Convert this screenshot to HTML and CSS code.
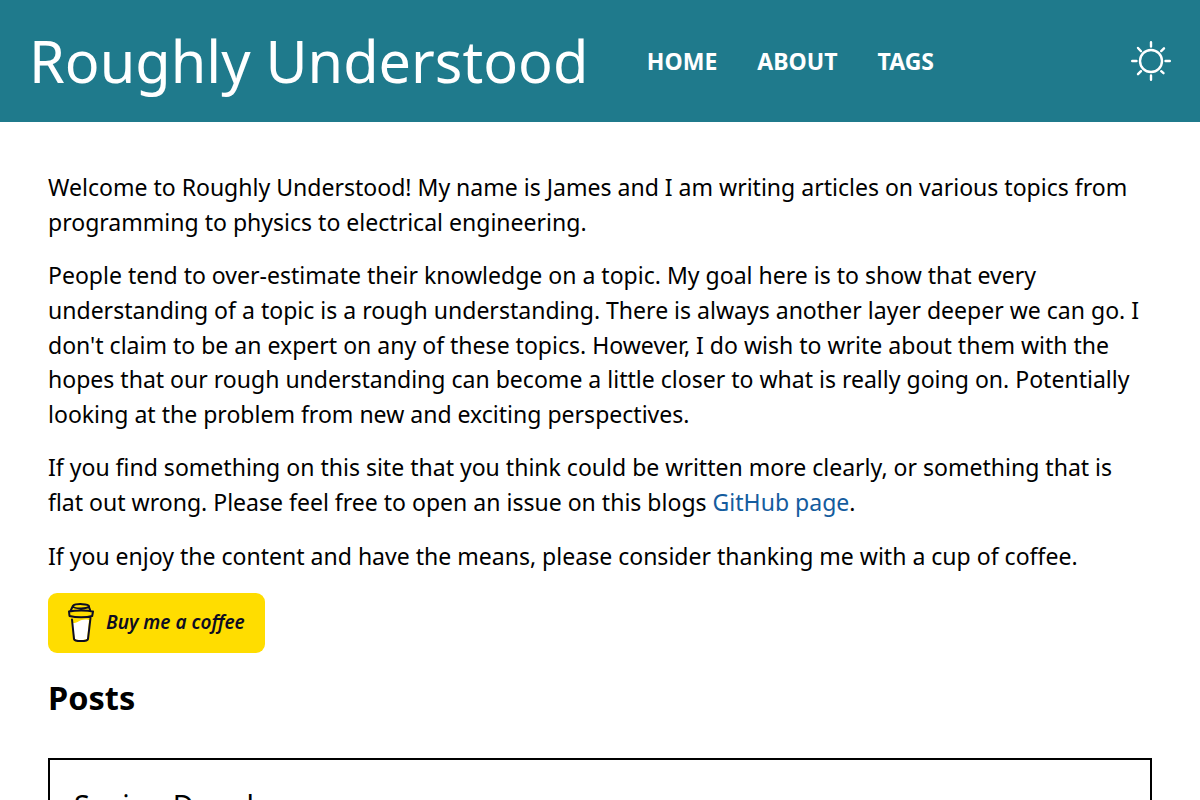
FILE: index.html
```html
<!DOCTYPE html>
<html lang="en">
<head>
    <meta charset="UTF-8">
    <meta name="viewport" content="width=device-width, initial-scale=1.0">
    <title>Roughly Understood</title>
    <link rel="stylesheet" href="styles.css">
</head>
<body>
    <header class="site-header">
        <a class="site-title" href="#">Roughly Understood</a>
        <nav class="site-nav">
            <a href="#">HOME</a>
            <a href="#">ABOUT</a>
            <a href="#">TAGS</a>
        </nav>
        <button class="theme-toggle" aria-label="Toggle theme">
            <svg viewBox="0 0 40 40" width="40" height="40">
                <circle cx="20" cy="20" r="11"/>
                <path d="M20 1.2v4.3M20 34.5v4.3M1.2 20h4.3M34.5 20h4.3M7 7l3 3.200M33 7.300l-2.800 2.800M7 33.200l3-3M32.500 32.200l-2.300-2"/>
            </svg>
        </button>
    </header>

    <main class="content">
        <p>Welcome to Roughly Understood! My name is James and I am writing articles on various topics from programming to physics to electrical engineering.</p>
        <p>People tend to over-estimate their knowledge on a topic. My goal here is to show that every understanding of a topic is a rough understanding. There is always another layer deeper we can go. I don't claim to be an expert on any of these topics. However, I do wish to write about them with the hopes that our rough understanding can become a little closer to what is really going on. Potentially looking at the problem from new and exciting perspectives.</p>
        <p>If you find something on this site that you think could be written more clearly, or something that is flat out wrong. Please feel free to open an issue on this blogs <a href="#">GitHub page</a>.</p>
        <p>If you enjoy the content and have the means, please consider thanking me with a cup of coffee.</p>

        <a class="coffee-button" href="#">
            <svg class="coffee-cup" viewBox="0 0 30 40" width="30" height="40">
                <path class="milk" d="M6 20c6 1 8-5 17-3l-2 19c-4 1.500-9 1.500-12 0z"/>
                <path d="M7 3.500c1 2.500 14 2.500 16 .2 1-3-13-3.500-16-1L4.500 8M23 4l1.500 4M3 8.500c7-1.500 18-1.500 24 0l-.8 4.500c-6 1.800-16 1.800-22.700 0zM6 16.500L8 36c.5 2.800 13.500 2.800 14 0l2.500-21"/>
            </svg>
            <span>Buy me a coffee</span>
        </a>

        <h2>Posts</h2>
        <article class="post-card">
            <a class="post-title" href="#">Seeing Doppler</a>
        </article>
    </main>
</body>
</html>
```
FILE: styles.css
```css
* {
    box-sizing: border-box;
}

body {
    margin: 0;
    height: 100vh;
    overflow: hidden;
    font-family: "Noto Sans", sans-serif;
    font-size: 23.04px;
    line-height: 34.7px;
    color: #000;
    background-color: #fff;
}

a {
    color: #145c9e;
    text-decoration: none;
}

.site-header {
    display: flex;
    align-items: center;
    height: 122px;
    padding: 0 29px;
    background-color: #1f7a8c;
}

.site-header a {
    color: #fff;
}

.site-header .site-title {
    font-size: 57.6px;
    line-height: 1.5;
}

.site-nav {
    display: flex;
    gap: 40px;
    margin-left: 58.5px;
    font-weight: bold;
}

.theme-toggle {
    display: flex;
    margin-left: auto;
    padding: 0;
    border: none;
    background: none;
}

.theme-toggle svg {
    fill: none;
    stroke: #fff;
    stroke-width: 2.4;
    stroke-linecap: round;
}

.content {
    display: flex;
    flex-direction: column;
    height: calc(100vh - 122px);
    padding: 48px 48px 0;
}

.content p {
    flex-shrink: 0;
    margin: 0 0 18.7px;
}

.content p:nth-of-type(3) {
    margin-bottom: 19px;
}

.coffee-button {
    display: flex;
    flex-shrink: 0;
    align-items: center;
    gap: 10px;
    width: 217px;
    height: 60px;
    margin-top: 0.6px;
    padding-left: 18px;
    border-radius: 9px;
    background-color: #ffdd00;
    color: #0d0c22;
    font-size: 19px;
    font-style: italic;
    font-weight: 600;
    white-space: nowrap;
}

.coffee-cup {
    fill: none;
    stroke: #0d0c22;
    stroke-width: 2;
    stroke-linejoin: round;
    stroke-linecap: round;
}

.coffee-cup .milk {
    fill: #fff;
    stroke: none;
}

h2 {
    flex-shrink: 0;
    margin: 21px 0 36px;
    font-size: 32.5px;
    line-height: 48px;
}

.post-card {
    flex: 1;
    min-height: 0;
    padding: 23px 24px 0;
    border: 2px solid #000;
    border-bottom: none;
    overflow: hidden;
}

.post-title {
    display: block;
    color: #000;
    font-size: 28.8px;
    line-height: 43px;
}
```
